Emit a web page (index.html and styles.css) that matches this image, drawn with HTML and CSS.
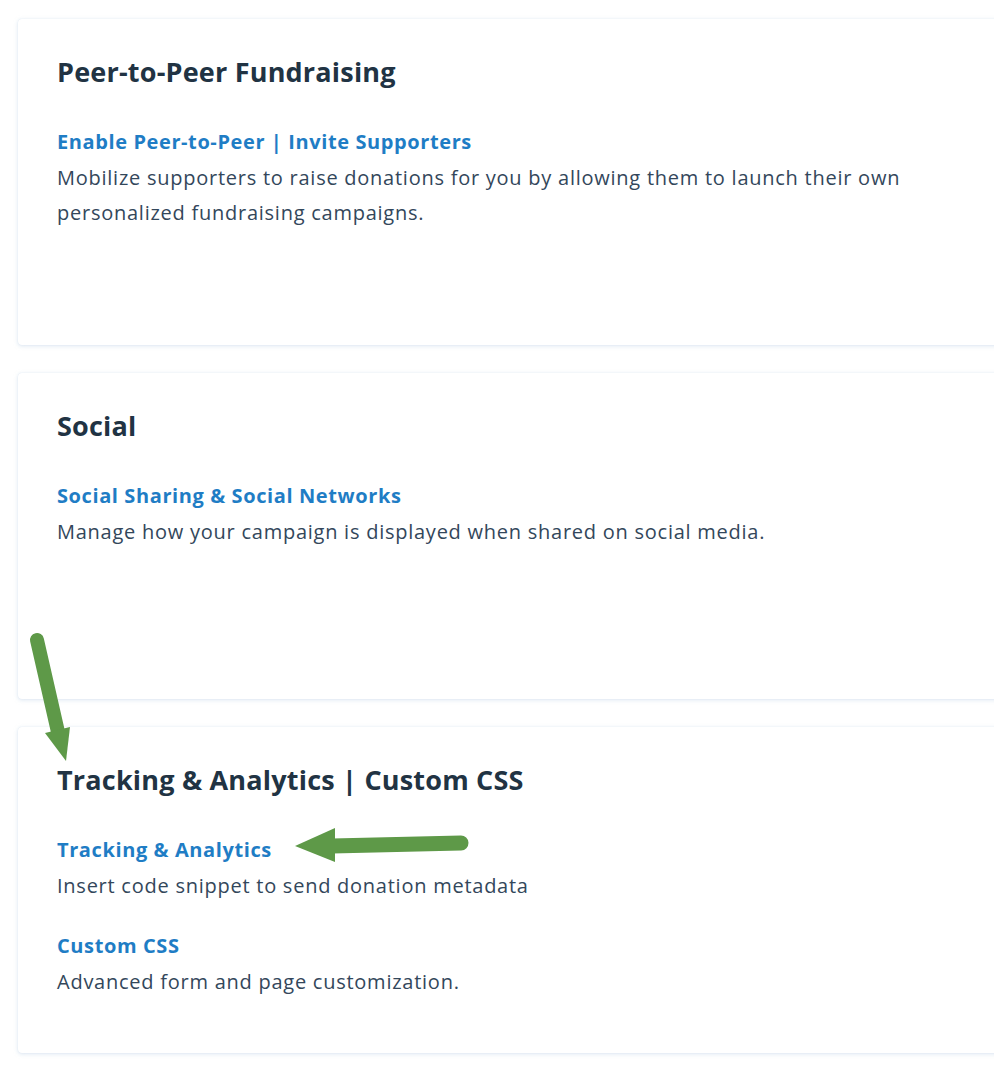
FILE: index.html
```html
<!DOCTYPE html>
<html lang="en">
<head>
  <meta charset="UTF-8" />
  <meta name="viewport" content="width=device-width, initial-scale=1" />
  <title>Campaign Settings</title>
  <link rel="stylesheet" href="styles.css">
</head>
<body>
  <div class="page">
    <section class="card">
      <h2 class="card-title">Peer-to-Peer Fundraising</h2>
      <div class="setting">
        <a href="#" class="setting-link">Enable Peer-to-Peer | Invite Supporters</a>
        <p class="setting-desc">Mobilize supporters to raise donations for you by allowing them to launch their own personalized fundraising campaigns.</p>
      </div>
    </section>

    <section class="card">
      <h2 class="card-title">Social</h2>
      <div class="setting">
        <a href="#" class="setting-link">Social Sharing &amp; Social Networks</a>
        <p class="setting-desc">Manage how your campaign is displayed when shared on social media.</p>
      </div>
    </section>

    <section class="card">
      <h2 class="card-title">Tracking &amp; Analytics | Custom CSS</h2>
      <div class="setting">
        <a href="#" class="setting-link">Tracking &amp; Analytics</a>
        <p class="setting-desc">Insert code snippet to send donation metadata</p>
      </div>
      <div class="setting">
        <a href="#" class="setting-link">Custom CSS</a>
        <p class="setting-desc">Advanced form and page customization.</p>
      </div>
    </section>

    <!-- annotation arrows -->
    <svg class="arrows" width="994" height="1078" viewBox="0 0 994 1078">
      <g fill="#5e9948" stroke="#5e9948" stroke-linecap="round">
        <line x1="37" y1="640" x2="58" y2="732" stroke-width="14" />
        <polygon points="45,733 70,727 66,761" stroke="none" />
        <line x1="461" y1="843" x2="332" y2="846" stroke-width="15" />
        <polygon points="335,828 335,862 295,846" stroke="none" />
      </g>
    </svg>
  </div>
</body>
</html>
```

FILE: styles.css
```css
body {
  margin: 0;
  padding: 0;
  background: #fff;
  font-family: 'Open Sans', 'Noto Sans', sans-serif;
  color: #33475b;
  overflow: hidden;
}

.page {
  position: relative;
  padding: 19px 0 26px 18px;
}

.card {
  box-sizing: border-box;
  min-height: 326px;
  margin: 0 -40px 28px 0;
  padding: 36px 39px;
  background: #fff;
  border-radius: 4px;
  box-shadow: 0 1px 4px rgba(190, 210, 230, 0.55), 0 0 1px rgba(200, 215, 235, 0.6);
}

.card-title {
  margin: 0;
  font-size: 27px;
  line-height: 34px;
  font-weight: 700;
  letter-spacing: 0.2px;
  color: #213343;
}

.setting {
  margin-top: 25px;
}

.card-title + .setting {
  margin-top: 35px;
}

.setting-link {
  display: block;
  font-size: 20px;
  line-height: 36px;
  font-weight: 700;
  letter-spacing: 0.6px;
  color: #1f7dc5;
  text-decoration: none;
}

.setting-desc {
  margin: 0;
  max-width: 880px;
  font-size: 20px;
  line-height: 35px;
  letter-spacing: 0.75px;
  color: #33475b;
}

.arrows {
  position: absolute;
  top: 0;
  left: 0;
  pointer-events: none;
}
```
